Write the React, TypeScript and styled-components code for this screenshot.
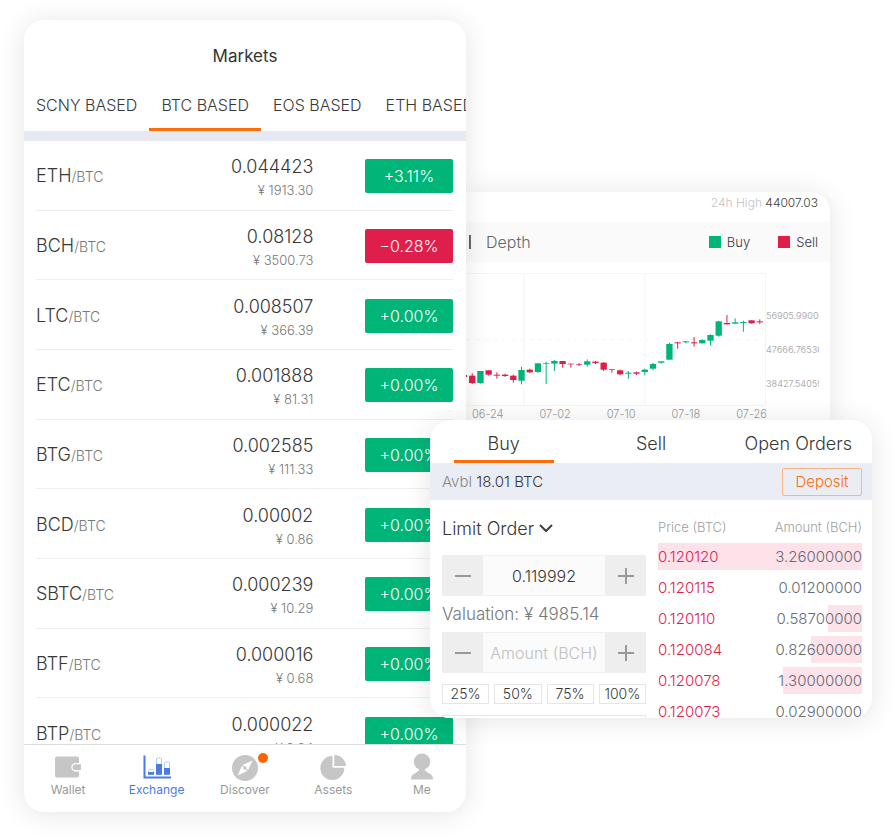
import React, { useState } from "react";
import styled, { createGlobalStyle, css } from "styled-components";

const GREEN = "#00b578";
const RED = "#e01e4c";
const ORANGE = "#fa6f0a";

const GlobalStyle = createGlobalStyle`
  *, *::before, *::after { box-sizing: border-box; }
  body {
    margin: 0;
    background: #fff;
    color: #383838;
    font-family: Inter, "Liberation Sans", sans-serif;
    font-weight: 300;
  }
  button, input, select { font: inherit; color: inherit; margin: 0; }
  button { cursor: pointer; }
`;

/* ---------- page ---------- */

const Stage = styled.main`
  display: grid;
  grid-template-columns: 406fr 36fr 364fr 42fr;
  grid-template-rows: 172px auto auto 1fr;
  padding: 20px 24px 28px;
`;

const Card = styled.section`
  background: #fff;
  border-radius: 20px;
  overflow: hidden;
  min-width: 0;
  box-shadow: 0 2px 28px rgba(0, 0, 0, 0.11);
`;

/* ---------- markets ---------- */

const MarketsCard = styled(Card)`
  grid-column: 1 / 3;
  grid-row: 1 / 5;
  z-index: 1;
  display: flex;
  flex-direction: column;
`;

const Title = styled.h1`
  margin: 0;
  padding-top: 24px;
  font-size: 17px;
  line-height: 24px;
  font-weight: 400;
  text-align: center;
  color: #333;
`;

const BaseTabs = styled.nav`
  display: flex;
  overflow: hidden;
  margin-top: 12px;
  border-bottom: 10px solid #e6e9f1;
`;

const BaseTab = styled.button<{ $active?: boolean }>`
  flex: none;
  height: 51px;
  padding: 2px 12px 0;
  border: 0;
  border-bottom: 3px solid ${(p) => (p.$active ? ORANGE : "transparent")};
  background: none;
  font-size: 16px;
  white-space: nowrap;
`;

const MarketScroll = styled.div`
  height: 603px;
  overflow: hidden;
  padding: 0 13px 0 12px;
`;

const MarketTable = styled.table`
  width: 100%;
  height: 627px;
  border-collapse: collapse;
  table-layout: fixed;
`;

const MarketCell = styled.td<{ $end?: boolean }>`
  padding: 2px 0 0;
  border-bottom: 1px solid #efefef;
  text-align: ${(p) => (p.$end ? "right" : "left")};
  vertical-align: middle;
`;

const PriceCell = styled(MarketCell)`
  padding: 6px 2px 0 0;
`;

const Pair = styled.span`
  font-size: 18px;
  line-height: 24px;
`;

const Quote = styled.span`
  font-size: 14px;
  color: #777;
`;

const Price = styled.div`
  font-size: 18px;
  line-height: 24px;
`;

const Fiat = styled.div`
  font-size: 13px;
  line-height: 22px;
  color: #777;
`;

const Change = styled.span<{ $down?: boolean }>`
  display: inline-flex;
  align-items: center;
  justify-content: center;
  width: 88px;
  height: 34px;
  border-radius: 2px;
  background: ${(p) => (p.$down ? RED : GREEN)};
  color: #fff;
  font-size: 16px;
  vertical-align: middle;
`;

const BottomNav = styled.nav`
  display: grid;
  grid-template-columns: repeat(5, 1fr);
  height: 68px;
  border-top: 1px solid #dcdcdc;
`;

const NavItem = styled.a<{ $active?: boolean }>`
  position: relative;
  display: flex;
  flex-direction: column;
  align-items: center;
  padding-top: 8px;
  gap: 1px;
  color: ${(p) => (p.$active ? "#4a7be0" : "#999")};
  font-size: 12px;
  font-weight: 400;
  line-height: 16px;
  text-decoration: none;
  svg { display: block; }
`;

const Dot = styled.span`
  position: absolute;
  top: 8px;
  left: calc(50% + 13px);
  width: 10px;
  height: 10px;
  border-radius: 50%;
  background: #fa6400;
`;

const markets = [
  ["ETH", "0.044423", "1913.30", "+3.11%"],
  ["BCH", "0.08128", "3500.73", "−0.28%"],
  ["LTC", "0.008507", "366.39", "+0.00%"],
  ["ETC", "0.001888", "81.31", "+0.00%"],
  ["BTG", "0.002585", "111.33", "+0.00%"],
  ["BCD", "0.00002", "0.86", "+0.00%"],
  ["SBTC", "0.000239", "10.29", "+0.00%"],
  ["BTF", "0.000016", "0.68", "+0.00%"],
  ["BTP", "0.000022", "0.94", "+0.00%"],
];

const GREY = "#c6c6c6";

const WalletIcon = () => (
  <svg width="28" height="28" viewBox="0 0 28 28" aria-hidden="true">
    <path fill={GREY} d="M3 3.500h20a2 2 0 0 1 2 2V10h-3.500a4.200 4.200 0 0 0 0 8.400H25v4.100a2 2 0 0 1-2 2H3a2 2 0 0 1-2-2v-17a2 2 0 0 1 2-2z" />
    <path fill={GREY} d="M21.500 11.300H27v5.800h-5.500a2.900 2.900 0 0 1 0-5.800z" />
  </svg>
);

const ExchangeIcon = () => (
  <svg width="28" height="28" viewBox="0 0 28 28" aria-hidden="true" fill="none">
    <path d="M1.500 2.500v22H28" stroke="#4a7be0" strokeWidth="2" />
    <rect x="5.500" y="16.500" width="5" height="5" rx="1" stroke="#b9cbf3" />
    <rect x="13.500" y="5" width="5" height="16.500" rx="1" stroke="#b9cbf3" />
    <rect x="21.500" y="9" width="5" height="12.500" rx="1" stroke="#b9cbf3" />
    <path fill="#4a7be0" d="M5 19h6v2.800H5zM13 11h6v10.800h-6zM21 15h6v6.800h-6z" />
  </svg>
);

const DiscoverIcon = () => (
  <svg width="28" height="28" viewBox="0 0 28 28" aria-hidden="true">
    <circle cx="14" cy="15" r="13" fill={GREY} />
    <path fill="#fff" d="M21.500 7.500l-4.500 9.800-5.300-5.300zM6.500 22.500l4.500-9.800 5.300 5.300z" />
    <circle cx="14" cy="15" r="1.700" fill={GREY} />
  </svg>
);

const AssetsIcon = () => (
  <svg width="28" height="28" viewBox="0 0 28 28" aria-hidden="true" fill={GREY}>
    <path d="M13.500 3v11.800h11.800A12 12 0 1 1 13.500 3z" />
    <path d="M15.300 2A11.800 11.800 0 0 1 27 13.100H15.300z" />
  </svg>
);

const MeIcon = () => (
  <svg width="28" height="28" viewBox="0 0 28 28" aria-hidden="true" fill={GREY}>
    <circle cx="14" cy="8.800" r="8.200" />
    <path d="M11.500 15.500h5c0 2 1.500 3.200 4.500 4.700 3 1.500 4 3.300 4 6.300H3c0-3 1-4.800 4-6.300 3-1.500 4.500-2.700 4.500-4.700z" />
  </svg>
);

const navItems = [
  { label: "Wallet", Icon: WalletIcon },
  { label: "Exchange", Icon: ExchangeIcon, active: true },
  { label: "Discover", Icon: DiscoverIcon, dot: true },
  { label: "Assets", Icon: AssetsIcon },
  { label: "Me", Icon: MeIcon },
];

function Markets() {
  const [base, setBase] = useState("BTC");
  return (
    <MarketsCard>
      <Title>Markets</Title>
      <BaseTabs>
        {["SCNY", "BTC", "EOS", "ETH"].map((b) => (
          <BaseTab key={b} $active={b === base} onClick={() => setBase(b)}>
            {b} BASED
          </BaseTab>
        ))}
      </BaseTabs>
      <MarketScroll>
        <MarketTable>
          <colgroup>
            <col width="36%" />
            <col />
            <col width="33%" />
          </colgroup>
          <tbody>
            {markets.map(([pair, price, fiat, change]) => (
              <tr key={pair}>
                <MarketCell>
                  <Pair>{pair}</Pair>
                  <Quote>/BTC</Quote>
                </MarketCell>
                <PriceCell $end>
                  <Price>{price}</Price>
                  <Fiat>¥ {fiat}</Fiat>
                </PriceCell>
                <MarketCell $end>
                  <Change $down={change.startsWith("−")}>{change}</Change>
                </MarketCell>
              </tr>
            ))}
          </tbody>
        </MarketTable>
      </MarketScroll>
      <BottomNav>
        {navItems.map(({ label, Icon, active, dot }) => (
          <NavItem key={label} href="#" $active={active}>
            <Icon />
            {label}
            {dot && <Dot />}
          </NavItem>
        ))}
      </BottomNav>
    </MarketsCard>
  );
}

/* ---------- chart ---------- */

const ChartCard = styled(Card)`
  grid-column: 3;
  grid-row: 2;
  border-radius: 0 20px 0 0;
`;

const HighLine = styled.div`
  padding: 0 12px 8px 0;
  font-size: 12px;
  line-height: 22px;
  text-align: right;
  color: #c4c4c4;
`;

const HighValue = styled.span`
  color: #404040;
`;

const ChartBar = styled.div`
  display: flex;
  align-items: center;
  height: 40px;
  padding: 0 12px 0 3px;
  background: #fafafa;
`;

const Divider = styled.span`
  width: 2px;
  height: 14px;
  background: #666;
`;

const DepthTab = styled.button`
  margin: 0 auto 0 15px;
  padding: 0;
  border: 0;
  background: none;
  font-size: 16px;
  color: #666;
`;

const Legend = styled.span<{ $color: string }>`
  display: flex;
  align-items: center;
  gap: 6px;
  margin-left: 28px;
  font-size: 13px;
  &::before {
    content: "";
    width: 12px;
    height: 12px;
    background: ${(p) => p.$color};
  }
`;

const ChartArea = styled.div`
  display: grid;
  grid-template-columns: 1fr 53px;
  margin: 11px 11px 0 0;
`;

const Plot = styled.svg`
  display: block;
  width: 100%;
`;

const AxisY = styled.div`
  display: flex;
  flex-direction: column;
  gap: 22px;
  padding-top: 37px;
  overflow: hidden;
  font-size: 9px;
  font-weight: 400;
  line-height: 12px;
  color: #b0b0b0;
`;

const AxisX = styled.div`
  display: flex;
  justify-content: space-between;
  padding: 1px 63px 0 6px;
  height: 14px;
  overflow: hidden;
  font-size: 11px;
  line-height: 14px;
  color: #999;
`;

/* [rising, bodyTop, bodyBottom, wickTop, wickBottom] */
const candles: [number, number, number, number, number][] = [
  [0, 306, 312, 306, 312], [0, 308, 330, 301, 333], [1, 294, 330, 294, 332], [0, 292, 305, 292, 308],
  [0, 305, 308, 298, 317], [0, 305, 309, 302, 312], [0, 308, 321, 305, 329], [1, 291, 323, 282, 334],
  [0, 290, 298, 287, 300], [1, 271, 297, 271, 300], [1, 270, 272, 266, 333], [1, 264, 272, 261, 294],
  [0, 264, 273, 264, 284], [0, 272, 274, 272, 284], [0, 274, 276, 270, 279], [1, 265, 275, 259, 281],
  [0, 266, 270, 264, 273], [0, 269, 290, 267, 294], [0, 289, 291, 289, 299], [0, 292, 304, 290, 307],
  [1, 299, 302, 294, 317], [0, 298, 302, 296, 306], [1, 290, 297, 287, 307], [1, 273, 287, 270, 292],
  [1, 265, 269, 265, 272], [1, 213, 260, 209, 260], [0, 208, 211, 208, 227], [1, 205, 208, 204, 211],
  [0, 208, 211, 192, 221], [1, 201, 211, 199, 211], [1, 186, 203, 184, 217], [1, 145, 188, 143, 191],
  [0, 150, 154, 126, 154], [1, 148, 152, 136, 152], [1, 147, 150, 143, 176], [0, 142, 151, 142, 152],
  [0, 145, 148, 139, 153],
];

function Chart() {
  return (
    <ChartCard>
      <HighLine>
        24h High <HighValue>44007.03</HighValue>
      </HighLine>
      <ChartBar>
        <Divider />
        <DepthTab>Depth</DepthTab>
        <Legend $color={GREEN}>Buy</Legend>
        <Legend $color={RED}>Sell</Legend>
      </ChartBar>
      <ChartArea>
        <Plot viewBox="0 0 900 399" role="img" aria-label="Price chart">
          <g stroke="#f5f5f5" strokeWidth="3" fill="none">
            <path d="M0 1.500H898.500V397.500H0M173.500 0V397M536.500 0V397" />
            <path d="M0 199.500H898" strokeDasharray="15 12" stroke="#f7f7f7" />
          </g>
          {candles.map(([up, top, bottom, hi, lo], i) => {
            const cx = -6 + i * 24.65;
            return (
              <g key={i} fill={up ? GREEN : RED}>
                <rect x={cx - 9.5} y={top} width="19" height={bottom - top} />
                <rect x={cx - 1.5} y={hi} width="3" height={lo - hi} />
              </g>
            );
          })}
        </Plot>
        <AxisY>
          <span>56905.99000</span>
          <span>47666.76530</span>
          <span>38427.54059</span>
        </AxisY>
      </ChartArea>
      <AxisX>
        <span>06-24</span>
        <span>07-02</span>
        <span>07-10</span>
        <span>07-18</span>
        <span>07-26</span>
      </AxisX>
    </ChartCard>
  );
}

/* ---------- trade ---------- */

const TradeCard = styled(Card)`
  grid-column: 2 / 5;
  grid-row: 3;
  z-index: 2;
  max-height: 298px;
`;

const TradeTabs = styled.nav`
  display: grid;
  grid-template-columns: repeat(3, 1fr);
`;

const TradeTab = styled.button<{ $active?: boolean }>`
  display: flex;
  flex-direction: column;
  align-items: center;
  justify-content: space-between;
  height: 43px;
  padding: 12px 0 0;
  border: 0;
  background: none;
  font-size: 18px;
  line-height: 24px;
  white-space: nowrap;
  &::after {
    content: "";
    width: 100px;
    height: 3px;
    background: ${(p) => (p.$active ? ORANGE : "transparent")};
  }
`;

const Balance = styled.div`
  display: flex;
  align-items: center;
  justify-content: space-between;
  height: 37px;
  padding: 0 10px 0 12px;
  background: #eaedf4;
  font-size: 15px;
`;

const Muted = styled.span`
  color: #888;
`;

const Deposit = styled.button`
  width: 80px;
  height: 28px;
  padding: 0;
  border: 1px solid #f9b48a;
  border-radius: 2px;
  background: none;
  color: ${ORANGE};
  font-size: 15px;
`;

const TradeBody = styled.div`
  display: grid;
  grid-template-columns: 1fr 1fr;
  gap: 12px;
  padding: 15px 10px 0 12px;
`;

const OrderForm = styled.form`
  min-width: 0;
`;

const OrderType = styled.label`
  display: flex;
  align-items: center;
  gap: 5px;
  height: 26px;
  font-size: 18px;
`;

const TypeSelect = styled.select`
  appearance: none;
  field-sizing: content;
  padding: 0;
  border: 0;
  background: none;
`;

const Stepper = styled.div`
  display: grid;
  grid-template-columns: 41px 1fr 41px;
  height: 41px;
  background: #eee;
`;

const PriceStepper = styled(Stepper)`
  margin-top: 14px;
`;

const StepButton = styled.button`
  display: grid;
  place-items: center;
  padding: 0;
  border: 0;
  background: none;
`;

const StepInput = styled.input`
  width: 100%;
  min-width: 0;
  padding: 0;
  border: 1px solid #f0f0f0;
  border-width: 1px 0;
  background: #fbfbfb;
  text-align: center;
  font-size: 16px;
  &::placeholder { color: #c0c0c0; opacity: 1; }
`;

const Valuation = styled.div`
  font-size: 17px;
  line-height: 36px;
  color: #777;
  white-space: nowrap;
`;

const outlined = css`
  border: 1px solid #e6e6e6;
  background: #fff;
`;

const Percents = styled.div`
  display: grid;
  grid-template-columns: repeat(4, 1fr);
  gap: 5px;
  margin: 11px 0;
`;

const Percent = styled.button`
  ${outlined}
  height: 20px;
  padding: 0;
  font-size: 14px;
  line-height: 18px;
`;

const TotalBox = styled.div`
  ${outlined}
  height: 40px;
`;

const Book = styled.table`
  width: 100%;
  align-self: start;
  border-collapse: separate;
  border-spacing: 0 4px;
  margin-top: -4px;
`;

const BookHead = styled.th<{ $end?: boolean }>`
  height: 24px;
  padding: 0;
  font-size: 13px;
  font-weight: 300;
  color: #a0a0a0;
  text-align: ${(p) => (p.$end ? "right" : "left")};
`;

const BookRow = styled.tr<{ $depth: number }>`
  background: linear-gradient(to left, #fde2e9 ${(p) => p.$depth}%, transparent ${(p) => p.$depth}%);
`;

const BookCell = styled.td<{ $end?: boolean }>`
  height: 27px;
  padding: 0;
  font-size: 15px;
  line-height: 27px;
  color: ${(p) => (p.$end ? "#666b76" : RED)};
  text-align: ${(p) => (p.$end ? "right" : "left")};
`;

const book: [string, string, number][] = [
  ["0.120120", "3.26000000", 100],
  ["0.120115", "0.01200000", 0],
  ["0.120110", "0.58700000", 17],
  ["0.120084", "0.82600000", 25],
  ["0.120078", "1.30000000", 39],
  ["0.120073", "0.02900000", 0],
];

const Minus = () => (
  <svg width="18" height="18" viewBox="0 0 18 18" aria-hidden="true">
    <path d="M1 9h16" stroke="#999" strokeWidth="2" />
  </svg>
);

const Plus = () => (
  <svg width="18" height="18" viewBox="0 0 18 18" aria-hidden="true">
    <path d="M1 9h16M9 1v16" stroke="#999" strokeWidth="2" />
  </svg>
);

function Trade() {
  const [tab, setTab] = useState("Buy");
  const [price, setPrice] = useState("0.119992");
  const [amount, setAmount] = useState("");
  return (
    <TradeCard>
      <TradeTabs>
        {["Buy", "Sell", "Open Orders"].map((t) => (
          <TradeTab key={t} $active={t === tab} onClick={() => setTab(t)}>
            {t}
          </TradeTab>
        ))}
      </TradeTabs>
      <Balance>
        <span>
          <Muted>Avbl</Muted> 18.01 BTC
        </span>
        <Deposit>Deposit</Deposit>
      </Balance>
      <TradeBody>
        <OrderForm onSubmit={(e) => e.preventDefault()}>
          <OrderType>
            <TypeSelect aria-label="Order type">
              <option>Limit Order</option>
            </TypeSelect>
            <svg width="14" height="10" viewBox="0 0 14 10" fill="none" aria-hidden="true">
              <path d="M1 2L7 8l6-6" stroke="#404040" strokeWidth="2" />
            </svg>
          </OrderType>
          <PriceStepper>
            <StepButton type="button" aria-label="Decrease price"><Minus /></StepButton>
            <StepInput aria-label="Price" value={price} onChange={(e) => setPrice(e.target.value)} />
            <StepButton type="button" aria-label="Increase price"><Plus /></StepButton>
          </PriceStepper>
          <Valuation>Valuation: ¥ 4985.14</Valuation>
          <Stepper>
            <StepButton type="button" aria-label="Decrease amount"><Minus /></StepButton>
            <StepInput
              aria-label="Amount"
              placeholder="Amount (BCH)"
              value={amount}
              onChange={(e) => setAmount(e.target.value)}
            />
            <StepButton type="button" aria-label="Increase amount"><Plus /></StepButton>
          </Stepper>
          <Percents>
            {[25, 50, 75, 100].map((p) => (
              <Percent key={p} type="button">{p}%</Percent>
            ))}
          </Percents>
          <TotalBox />
        </OrderForm>
        <Book>
          <thead>
            <tr>
              <BookHead>Price (BTC)</BookHead>
              <BookHead $end>Amount (BCH)</BookHead>
            </tr>
          </thead>
          <tbody>
            {book.map(([p, a, depth]) => (
              <BookRow key={p} $depth={depth}>
                <BookCell>{p}</BookCell>
                <BookCell $end>{a}</BookCell>
              </BookRow>
            ))}
          </tbody>
        </Book>
      </TradeBody>
    </TradeCard>
  );
}

export default function App() {
  return (
    <>
      <GlobalStyle />
      <Stage>
        <Markets />
        <Chart />
        <Trade />
      </Stage>
    </>
  );
}
